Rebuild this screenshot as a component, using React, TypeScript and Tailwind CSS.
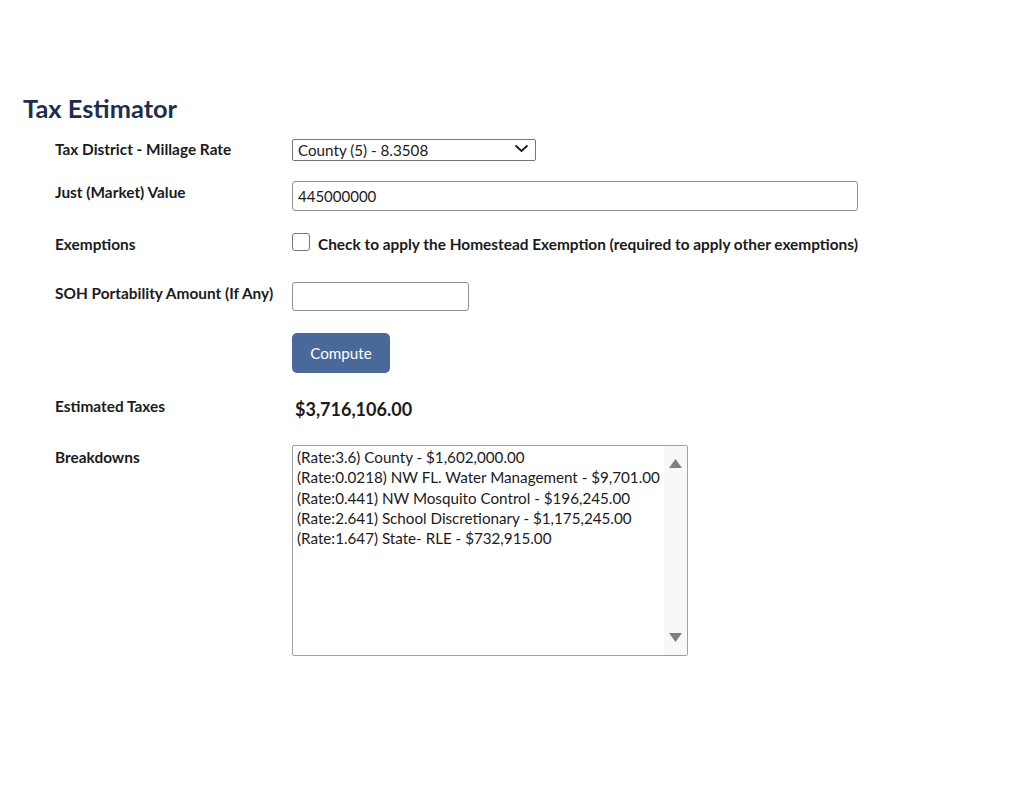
import { useState } from 'react'

const BREAKDOWNS = [
  '(Rate:3.6) County - $1,602,000.00',
  '(Rate:0.0218) NW FL. Water Management - $9,701.00',
  '(Rate:0.441) NW Mosquito Control - $196,245.00',
  '(Rate:2.641) School Discretionary - $1,175,245.00',
  '(Rate:1.647) State- RLE - $732,915.00',
]

function Label({ children }: { children: React.ReactNode }) {
  return (
    <div className="w-[237px] shrink-0 text-[15.4px] leading-[22px] font-bold text-[#1b1b1b]">
      {children}
    </div>
  )
}

export default function App() {
  const [homestead, setHomestead] = useState(false)
  const [value, setValue] = useState('445000000')
  const [soh, setSoh] = useState('')

  return (
    <div className="min-h-[791px] bg-white pl-[23px] pt-[92px] font-['Lato','Noto_Sans',sans-serif] text-[#1b1b1b]">
      <h1 className="text-[25.4px] leading-[32px] font-bold text-[#1f2d4d]">Tax Estimator</h1>

      <div className="ml-[32px]">
        {/* Tax district */}
        <div className="mt-[14px] flex items-start">
          <Label>Tax District - Millage Rate</Label>
          <div className="relative h-[22px] w-[244px]">
            <select className="h-full w-full appearance-none rounded-[2px] border border-[#767676] bg-white pl-[5px] text-[15.2px] leading-[20px] text-[#1b1b1b] outline-none">
              <option>County (5) - 8.3508</option>
            </select>
            <svg
              className="pointer-events-none absolute right-[7px] top-[5px]"
              width="15"
              height="10"
              viewBox="0 0 15 10"
              fill="none"
            >
              <path d="M1.5 2.5 L7.5 8 L13.5 2.5" stroke="#1b1b1b" strokeWidth="1.8" />
            </svg>
          </div>
        </div>

        {/* Just value */}
        <div className="mt-[21px] flex items-start">
          <Label>Just (Market) Value</Label>
          <input
            value={value}
            onChange={(e) => setValue(e.target.value)}
            className="h-[30px] w-[566px] rounded-[3px] border border-[#8f8f8f] px-[5px] text-[15px] text-[#1b1b1b] outline-none"
          />
        </div>

        {/* Exemptions */}
        <div className="mt-[22px] flex items-start">
          <Label>Exemptions</Label>
          <label className="flex items-start gap-[8px] text-[15.4px] leading-[22px] font-bold">
            <input
              type="checkbox"
              checked={homestead}
              onChange={(e) => setHomestead(e.target.checked)}
              className="mt-0 h-[18px] w-[18px] appearance-none rounded-[3px] border border-[#767676] bg-white checked:bg-[#4a699b]"
            />
            Check to apply the Homestead Exemption (required to apply other exemptions)
          </label>
        </div>

        {/* SOH */}
        <div className="mt-[27px] flex items-start">
          <Label>SOH Portability Amount (If Any)</Label>
          <input
            value={soh}
            onChange={(e) => setSoh(e.target.value)}
            className="h-[29px] w-[177px] rounded-[3px] border border-[#8f8f8f] px-[5px] text-[15px] outline-none"
          />
        </div>

        {/* Compute */}
        <div className="mt-[22px] flex items-start">
          <div className="w-[237px] shrink-0" />
          <button className="h-[40px] w-[98px] rounded-[5px] bg-[#4a699b] text-[15.2px] text-white">
            Compute
          </button>
        </div>

        {/* Estimated */}
        <div className="mt-[22px] flex items-start">
          <Label>Estimated Taxes</Label>
          <div className="pl-[3px] text-[18px] leading-[28px] font-bold">$3,716,106.00</div>
        </div>

        {/* Breakdowns */}
        <div className="mt-[22px] flex items-start">
          <div className="pt-[1px]">
            <Label>Breakdowns</Label>
          </div>
          <div className="flex h-[211px] w-[396px] rounded-[2px] border border-[#a0a0a0] bg-white">
            <div className="flex-1 pl-[4px] pt-[1px] text-[15.2px] leading-[20.3px] whitespace-nowrap text-[#1b1b1b]">
              {BREAKDOWNS.map((line) => (
                <div key={line}>{line}</div>
              ))}
            </div>
            <div className="flex w-[23px] flex-col items-center justify-between bg-[#f8f8f8] pt-[12px] pb-[12px]">
              <svg width="15" height="11" viewBox="0 0 15 11">
                <path d="M7.5 1 L14 10 L1 10 Z" fill="#7f7f7f" />
              </svg>
              <svg width="15" height="11" viewBox="0 0 15 11">
                <path d="M1 1 L14 1 L7.5 10 Z" fill="#7f7f7f" />
              </svg>
            </div>
          </div>
        </div>
      </div>
    </div>
  )
}
